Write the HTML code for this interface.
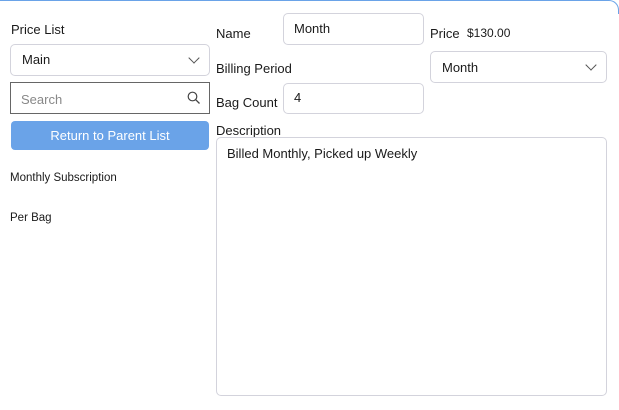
<!DOCTYPE html>
<html><head><style>
*{box-sizing:border-box;margin:0;padding:0}
body{width:619px;height:410px;background:#fff;font-family:"Liberation Sans",sans-serif;color:#1a1a1a;position:relative;overflow:hidden}
.frame{position:absolute;left:-2px;top:0;width:621px;height:14px;border-top:1.5px solid #6aa3e8;border-right:1.5px solid #6aa3e8;border-top-right-radius:10px}
.t{position:absolute;font-size:13px;white-space:nowrap}
.box{position:absolute;border:1px solid #d3d3dc;border-radius:5px;background:#fff}
.chev{position:absolute;width:8px;height:8px;border-right:1.2px solid #555;border-bottom:1.2px solid #555;transform:rotate(45deg)}
</style></head><body>
<div class="frame"></div>
<div class="t" style="left:11px;top:22px">Price List</div>
<div class="box" style="left:10px;top:44px;width:200px;height:32px"></div>
<div class="t" style="left:22px;top:52px">Main</div>
<div class="chev" style="left:190px;top:54px"></div>
<div style="position:absolute;left:10px;top:82px;width:200px;height:32px;border:1px solid #666"></div>
<div class="t" style="left:21px;top:92px;color:#888">Search</div>
<svg style="position:absolute;left:187px;top:91px" width="14" height="14" viewBox="0 0 14 14"><circle cx="5.5" cy="5.5" r="4.3" fill="none" stroke="#444" stroke-width="1.2"/><line x1="8.6" y1="8.6" x2="12.5" y2="12.5" stroke="#444" stroke-width="1.3"/></svg>
<div style="position:absolute;left:11px;top:121px;width:198px;height:29px;background:#6aa3e8;border-radius:4px;color:#fff;font-size:13px;text-align:center;line-height:29px">Return to Parent List</div>
<div class="t" style="left:10px;top:172px;font-size:11.5px">Monthly Subscription</div>
<div class="t" style="left:10px;top:212px;font-size:11.5px">Per Bag</div>

<div class="t" style="left:216px;top:26px">Name</div>
<div class="box" style="left:283px;top:13px;width:141px;height:32px"></div>
<div class="t" style="left:294px;top:21px">Month</div>
<div class="t" style="left:430px;top:26px">Price</div>
<div class="t" style="left:467px;top:26px;font-size:12px">$130.00</div>
<div class="t" style="left:216px;top:61px">Billing Period</div>
<div class="box" style="left:430px;top:51px;width:177px;height:32px"></div>
<div class="t" style="left:442px;top:60px">Month</div>
<div class="chev" style="left:587px;top:61px"></div>
<div class="t" style="left:216px;top:95px">Bag Count</div>
<div class="box" style="left:283px;top:83px;width:141px;height:31px"></div>
<div class="t" style="left:294px;top:90px">4</div>
<div class="t" style="left:216px;top:123px">Description</div>
<div class="box" style="left:216px;top:137px;width:391px;height:259px"></div>
<div class="t" style="left:227px;top:146px">Billed Monthly, Picked up Weekly</div>
</body></html>
